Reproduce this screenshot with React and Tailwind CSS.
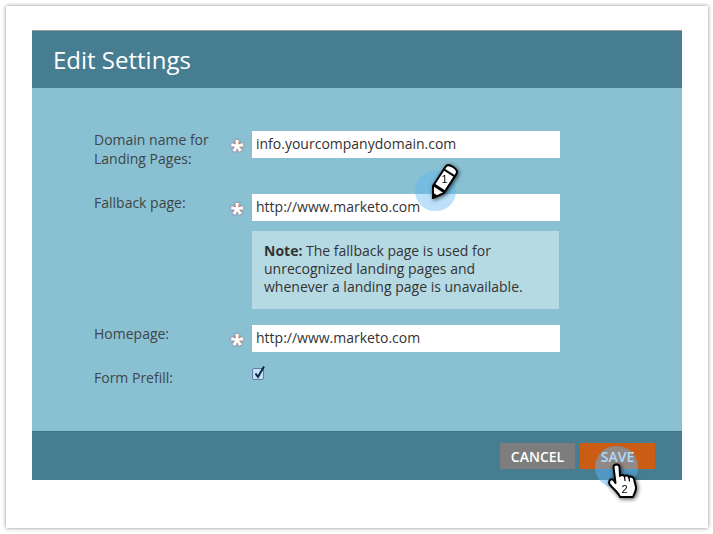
import React from "react";

const font = { fontFamily: '"Open Sans", sans-serif' };

function Star() {
  return (
    <span className="flex h-[27px] w-[22px] items-start justify-center pr-[8px] pt-[3px] text-[25px] leading-[30px] font-bold text-white [text-shadow:0_0_3px_#b9505a]">
      *
    </span>
  );
}

function Field({ value }) {
  return (
    <div className="flex h-[27px] w-[308px] items-center bg-white pl-[4px] text-[14px] text-[#333]">
      {value}
    </div>
  );
}

function PencilMarker() {
  return (
    <div className="absolute left-[415px] top-[155px] h-[56px] w-[50px]">
      <div className="absolute left-0 top-[16px] h-[40px] w-[41px] rounded-full bg-[#5ab4f5]/40" />
      <svg className="absolute left-0 top-0 drop-shadow-[1px_1px_2px_rgba(0,0,0,0.7)]" width="50" height="56" viewBox="0 0 50 56">
        <g transform="translate(18 43) rotate(33)">
          <path d="M0 0 L-6.5 -10 L-6.5 -33 Q-6.5 -37 0 -37 Q6.5 -37 6.5 -33 L6.5 -10 Z" fill="#fff" stroke="#000" strokeWidth="2" strokeLinejoin="round" />
          <path d="M0 0 L-2.6 -4 L2.6 -4 Z" fill="#000" stroke="#000" strokeWidth="1" />
          <path d="M-6.5 -10 L6.5 -10 L6.5 -13 L-6.5 -13 Z" fill="#000" />
          <path d="M-6.5 -30 L6.5 -30" stroke="#000" strokeWidth="2" />
        </g>
        <text x="29.5" y="28" textAnchor="middle" fontSize="11" fill="#000" fontFamily="Liberation Sans, sans-serif">1</text>
      </svg>
    </div>
  );
}

function HandMarker() {
  return (
    <div className="absolute left-[595px] top-[446px] h-[56px] w-[46px]">
      <div className="absolute left-0 top-0 h-[42px] w-[43px] rounded-full bg-[#5ab4f5]/50" />
      <svg className="absolute left-[5px] top-[12px] drop-shadow-[1px_1px_2px_rgba(0,0,0,0.7)]" width="41" height="42" viewBox="0 0 41 42">
        <path
          d="M13.5 9 C13.5 5.5 19.5 5.5 19.5 9 L20 18 C20.5 16.5 24 16.5 24.5 18.5 C25 17 28.5 17 29 19.5 C29.5 18 33.5 18.5 34 21 L36 29 C36.5 33 34 36 33 39 L20 39 C19 35 12 30 9.5 26 C8 23 11 20 13.5 22 L15.5 25 Z"
          fill="#fff"
          stroke="#000"
          strokeWidth="2"
          strokeLinejoin="round"
        />
        <path d="M24.5 18.5 L25 23 M29 19.5 L29.5 23.5" stroke="#000" strokeWidth="1.2" fill="none" />
        <text x="24.5" y="34.5" textAnchor="middle" fontSize="11" fill="#000" fontFamily="Liberation Sans, sans-serif">2</text>
      </svg>
    </div>
  );
}

export default function App() {
  return (
    <div className="relative h-[534px] w-[713px] bg-white p-[6px] pr-[5px]" style={font}>
      <div className="h-[522px] bg-white pb-[48px] pl-[26px] pr-[26px] pt-[24px] shadow-[0_0_4px_rgba(0,0,0,0.45)]">
        <div className="flex h-[450px] w-[650px] flex-col">
          <div className="flex h-[58px] items-center border-t border-[#9a9a9a] bg-[#477d91] pl-[21px] text-[24px] text-white">
            Edit Settings
          </div>

          <div className="flex-1 bg-[#89c1d3] pl-[62px] pt-[43px] text-[14px] leading-[18.5px] text-[#404548]">
            <div className="flex">
              <div className="w-[136px] pt-0">
                Domain name for
                <br />
                Landing Pages:
              </div>
              <Star />
              <Field value="info.yourcompanydomain.com" />
            </div>

            <div className="mt-[26px] flex">
              <div className="w-[136px]">Fallback page:</div>
              <Star />
              <div>
                <Field value="http://www.marketo.com" />
                <div className="mt-[10px] h-[78px] w-[307px] bg-[#b6dae3] pl-[12px] pt-[11px] text-[14px] leading-[18px] text-[#333]">
                  <b>Note:</b> The fallback page is used for
                  <br />
                  unrecognized landing pages and
                  <br />
                  whenever a landing page is unavailable.
                </div>
              </div>
            </div>

            <div className="mt-[16px] flex">
              <div className="w-[136px]">Homepage:</div>
              <Star />
              <Field value="http://www.marketo.com" />
            </div>

            <div className="mt-[15px] flex">
              <div className="w-[158px] pt-[2px]">Form Prefill:</div>
              <div className="relative mt-[1px] h-[12px] w-[12px] rounded-[2px] border border-[#5a7fa8] bg-[#c5e0f7]">
                <svg className="absolute -top-[4px] left-0" width="13" height="15" viewBox="0 0 13 15">
                  <path d="M2.5 8.5 L5 12 L11 1.5" fill="none" stroke="#10243f" strokeWidth="2" />
                </svg>
              </div>
            </div>
          </div>

          <div className="flex h-[49px] items-start justify-end gap-[5px] border-t border-[#3f7386] bg-[#477d91] pr-[27px] pt-[11px] text-[14px] font-semibold text-white">
            <button className="h-[26px] w-[75px] bg-[#7d7d7d]">CANCEL</button>
            <button className="h-[26px] w-[75px] bg-[#cb5c14]">SAVE</button>
          </div>
        </div>
      </div>

      <PencilMarker />
      <HandMarker />
    </div>
  );
}
